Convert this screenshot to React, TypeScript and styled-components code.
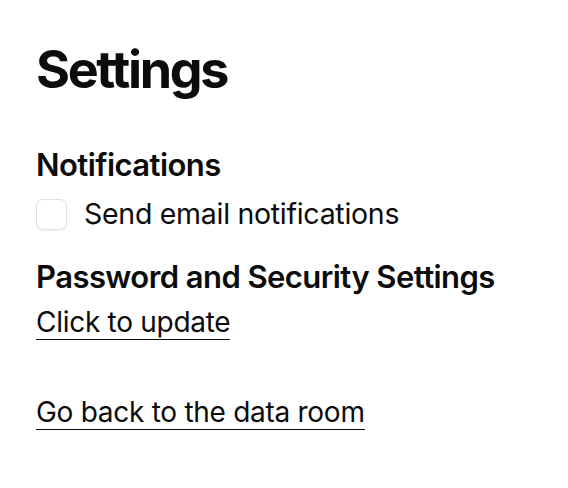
import React, { ReactElement, useState } from "react";
import styled, { createGlobalStyle } from "styled-components";

const GlobalStyle = createGlobalStyle`
  html, body {
    margin: 0;
    padding: 0;
    background: #ffffff;
  }
  body {
    font-family: Inter, "Noto Sans", sans-serif;
    color: #0c0c0c;
  }
`;

const Page = styled.div`
  display: flex;
  flex-direction: column;
  padding: 36px 36px 0;
`;

const Title = styled.h1`
  margin: 0;
  font-size: 52px;
  line-height: 68px;
  font-weight: 700;
  letter-spacing: -0.045em;
`;

const Section = styled.div<{ gap: number }>`
  display: flex;
  flex-direction: column;
  align-items: flex-start;
  margin-top: ${({ gap }) => gap}px;
`;

const SectionTitle = styled.h2`
  margin: 0;
  font-size: 31px;
  line-height: 40px;
  font-weight: 600;
  letter-spacing: -0.018em;
`;

const CheckRow = styled.label`
  display: flex;
  align-items: center;
  gap: 17px;
  height: 48px;
  margin-top: 5px;
  cursor: pointer;
`;

const Box = styled.span<{ checked?: boolean }>`
  width: 31px;
  height: 31px;
  box-sizing: border-box;
  border: 1.5px solid #e0e0e0;
  border-radius: 7px;
  background: ${({ checked }) => (checked ? "#111111" : "#ffffff")};
  box-shadow: 0 1px 2px rgba(0, 0, 0, 0.06);
`;

const Label = styled.span`
  font-size: 28.5px;
  line-height: 48px;
  font-weight: 400;
  letter-spacing: -0.01em;
`;

const TextLink = styled.a<{ offset?: number }>`
  margin-top: ${({ offset }) => offset || 0}px;
  font-size: 28px;
  line-height: 34px;
  font-weight: 400;
  letter-spacing: -0.01em;
  color: #0c0c0c;
  text-decoration: none;
  border-bottom: 1.5px solid #0c0c0c;
  cursor: pointer;
`;

export default function App(): ReactElement {
  const [notify, setNotify] = useState(false);

  return (
    <>
      <GlobalStyle />
      <Page>
        <Title>Settings</Title>
        <Section gap={41}>
          <SectionTitle>Notifications</SectionTitle>
          <CheckRow onClick={() => setNotify(!notify)}>
            <Box checked={notify} />
            <Label>Send email notifications</Label>
          </CheckRow>
        </Section>
        <Section gap={19}>
          <SectionTitle>Password and Security Settings</SectionTitle>
          <TextLink offset={8}>Click to update</TextLink>
        </Section>
        <Section gap={55}>
          <TextLink>Go back to the data room</TextLink>
        </Section>
      </Page>
    </>
  );
}
